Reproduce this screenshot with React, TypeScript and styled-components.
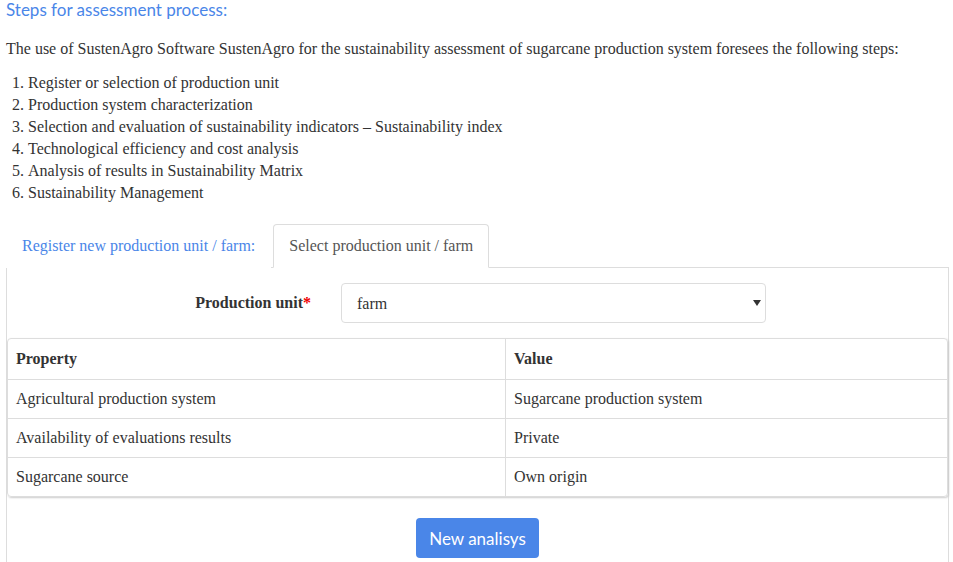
import React from "react";
import styled, { createGlobalStyle } from "styled-components";

const Global = createGlobalStyle`
  html, body { margin: 0; padding: 0; background: #fff; }
  body { font-family: "Liberation Serif", "Times New Roman", serif; color: #333; font-size: 16px; }
  * { box-sizing: border-box; }
`;

const Page = styled.div`
  padding: 0 4px 0 6px;
`;

const Heading = styled.h3`
  margin: 0;
  font-family: Lato, "Open Sans", sans-serif;
  font-weight: 400;
  font-size: 17px;
  line-height: 20px;
  color: #4a86e8;
`;

const Intro = styled.p`
  margin: 18px 0 0;
  line-height: 22px;
`;

const Steps = styled.ol`
  margin: 12px 0 0;
  padding-left: 22px;
  line-height: 22px;
`;

const Tabs = styled.div`
  display: flex;
  margin-top: 20px;
  align-items: flex-end;
`;

const Tab = styled.div<{ $active?: boolean }>`
  height: 44px;
  margin-bottom: -1px;
  padding: 0 15px;
  display: flex;
  align-items: center;
  line-height: 22px;
  border: 1px solid ${(p) => (p.$active ? "#ddd" : "transparent")};
  border-bottom-color: ${(p) => (p.$active ? "#fff" : "transparent")};
  border-radius: 4px 4px 0 0;
  background: #fff;
  color: ${(p) => (p.$active ? "#555" : "#4a86e8")};
  position: relative;
  z-index: 1;
  margin-right: 2px;
`;

const Panel = styled.div`
  border: 1px solid #ddd;
  border-bottom: none;
  padding: 15px 0 40px 0;
`;

const FormRow = styled.div`
  display: flex;
  align-items: center;
  gap: 30px;
`;

const Label = styled.label`
  width: 304px;
  text-align: right;
  font-weight: bold;
  line-height: 22px;
`;

const Req = styled.span`
  color: #e00;
`;

const SelectWrap = styled.div`
  position: relative;
  width: 425px;
  height: 40px;
`;

const Select = styled.select`
  appearance: none;
  -webkit-appearance: none;
  width: 100%;
  height: 100%;
  border: 1px solid #ddd;
  border-radius: 4px;
  background: #fff;
  padding: 0 15px;
  font-family: "Liberation Serif", serif;
  font-size: 16px;
  color: #333;
`;

const Caret = styled.svg`
  position: absolute;
  right: 5px;
  top: 17px;
  pointer-events: none;
`;

const Table = styled.table`
  margin-top: 15px;
  width: 941px;
  border-collapse: separate;
  border-spacing: 0;
  border: 1px solid #ddd;
  border-radius: 4px;
  box-shadow: 1px 1px 2px #ccc;
`;

const Th = styled.th<{ $w?: string }>`
  text-align: left;
  padding: 0 8px;
  height: 40px;
  font-weight: bold;
  width: ${(p) => p.$w || "auto"};
  border-left: ${(p) => (p.$w ? "none" : "1px solid #ddd")};
`;

const Td = styled.td<{ $second?: boolean }>`
  padding: 0 8px;
  height: 39px;
  border-top: 1px solid #ddd;
  border-left: ${(p) => (p.$second ? "1px solid #ddd" : "none")};
`;

const ButtonRow = styled.div`
  display: flex;
  justify-content: center;
  margin-top: 21px;
`;

const Button = styled.button`
  background: #4a86e8;
  color: #fff;
  border: none;
  border-radius: 4px;
  height: 40px;
  padding: 0 13px;
  font-family: Lato, "Open Sans", sans-serif;
  font-size: 17px;
  font-weight: 400;
`;

const rows = [
  ["Agricultural production system", "Sugarcane production system"],
  ["Availability of evaluations results", "Private"],
  ["Sugarcane source", "Own origin"],
];

export default function App() {
  return (
    <Page>
      <Global />
      <Heading>Steps for assessment process:</Heading>
      <Intro>
        The use of SustenAgro Software SustenAgro for the sustainability assessment of sugarcane production system foresees the following steps:
      </Intro>
      <Steps>
        <li>Register or selection of production unit</li>
        <li>Production system characterization</li>
        <li>Selection and evaluation of sustainability indicators – Sustainability index</li>
        <li>Technological efficiency and cost analysis</li>
        <li>Analysis of results in Sustainability Matrix</li>
        <li>Sustainability Management</li>
      </Steps>
      <Tabs>
        <Tab>Register new production unit / farm:</Tab>
        <Tab $active>Select production unit / farm</Tab>
      </Tabs>
      <Panel>
        <FormRow>
          <Label>
            Production unit<Req>*</Req>
          </Label>
          <SelectWrap>
            <Select defaultValue="farm">
              <option value="farm">farm</option>
            </Select>
            <Caret width="8" height="6" viewBox="0 0 8 6">
              <path d="M0 0 H8 L4 6 Z" fill="#333" />
            </Caret>
          </SelectWrap>
        </FormRow>
        <Table>
          <thead>
            <tr>
              <Th $w="497px">Property</Th>
              <Th>Value</Th>
            </tr>
          </thead>
          <tbody>
            {rows.map(([a, b]) => (
              <tr key={a}>
                <Td>{a}</Td>
                <Td $second>{b}</Td>
              </tr>
            ))}
          </tbody>
        </Table>
        <ButtonRow>
          <Button>New analisys</Button>
        </ButtonRow>
      </Panel>
    </Page>
  );
}
